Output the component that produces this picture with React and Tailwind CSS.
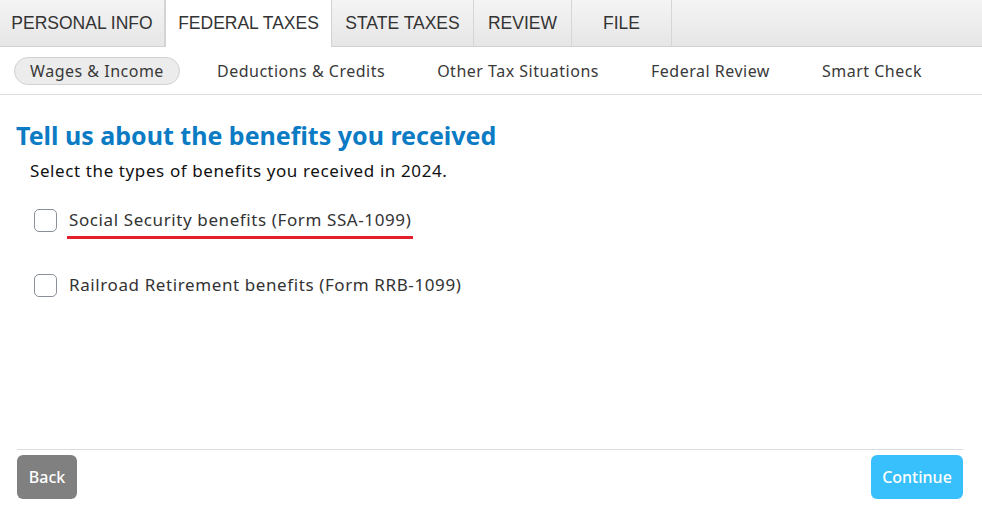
import React from "react";

const tabs = [
  { label: "PERSONAL INFO", w: "w-[165px]" },
  { label: "FEDERAL TAXES", w: "w-[167px]", active: true },
  { label: "STATE TAXES", w: "w-[142px]" },
  { label: "REVIEW", w: "w-[98px]" },
  { label: "FILE", w: "w-[100px]" },
];

function Checkbox() {
  return <span className="block w-[23px] h-[23px] rounded-[5px] border border-[#8a9099] bg-white shrink-0" />;
}

export default function App() {
  return (
    <div className="w-[982px] h-[519px] bg-white flex flex-col" style={{ fontFamily: "'Noto Sans', Lato, sans-serif" }}>
      {/* Top tabs */}
      <div className="flex h-[47px] bg-gradient-to-b from-[#f4f4f4] to-[#e6e6e6] border-b border-[#d2d2d2]" style={{ fontFamily: "'Liberation Sans', Arial, sans-serif" }}>
        {tabs.map((t) =>
          t.active ? (
            <div key={t.label} className={`${t.w} h-[47px] bg-white border-r border-l border-[#d2d2d2] flex items-center justify-center text-[17.5px] text-[#333] -mb-px`}>
              {t.label}
            </div>
          ) : (
            <div key={t.label} className={`${t.w} flex items-center justify-center text-[17.5px] text-[#333] border-r border-[#d6d6d6]`}>
              {t.label}
            </div>
          )
        )}
      </div>

      {/* Sub nav */}
      <div className="h-[48px] flex items-center border-b border-[#dcdcdc] text-[16px] tracking-[0.5px] text-[#393939]">
        <div className="ml-[14px] w-[166px] h-[28px] rounded-full bg-[#ececec] border border-[#d2d2d2] flex items-center justify-center">
          Wages &amp; Income
        </div>
        <div className="ml-[37px]">Deductions &amp; Credits</div>
        <div className="ml-[52px]">Other Tax Situations</div>
        <div className="ml-[52px]">Federal Review</div>
        <div className="ml-[52px]">Smart Check</div>
      </div>

      {/* Content */}
      <div className="flex-1 flex flex-col">
        <h1 className="ml-[16px] mt-[23px] text-[25px] leading-[34px] font-bold text-[#0b7bc4]">
          Tell us about the benefits you received
        </h1>
        <p className="ml-[30px] mt-[7px] text-[17px] tracking-[0.6px] leading-[24px] text-[#111]">
          Select the types of benefits you received in 2024.
        </p>
        <div className="ml-[34px] mt-[25px] flex items-center gap-[12px] h-[24px]">
          <Checkbox />
          <span className="relative text-[17px] tracking-[0.6px] text-[#333] leading-[24px]">
            Social Security benefits (Form SSA-1099)
            <span className="absolute left-[-2px] right-[-2px] top-[28px] h-[3px] bg-[#e3202b]" />
          </span>
        </div>
        <div className="ml-[34px] mt-[41px] flex items-center gap-[12px] h-[24px]">
          <Checkbox />
          <span className="text-[17px] tracking-[0.6px] text-[#333] leading-[24px]">Railroad Retirement benefits (Form RRB-1099)</span>
        </div>
      </div>

      {/* Footer */}
      <div className="mx-[17px] mr-[19px] border-t border-[#d7dde0] pt-[5px] pb-[20px] flex justify-between">
        <button className="w-[60px] h-[44px] rounded-[6px] bg-[#808080] text-white text-[16px] font-medium">Back</button>
        <button className="w-[92px] h-[44px] rounded-[6px] bg-[#38c0fc] text-white text-[16px] font-medium">Continue</button>
      </div>
    </div>
  );
}
